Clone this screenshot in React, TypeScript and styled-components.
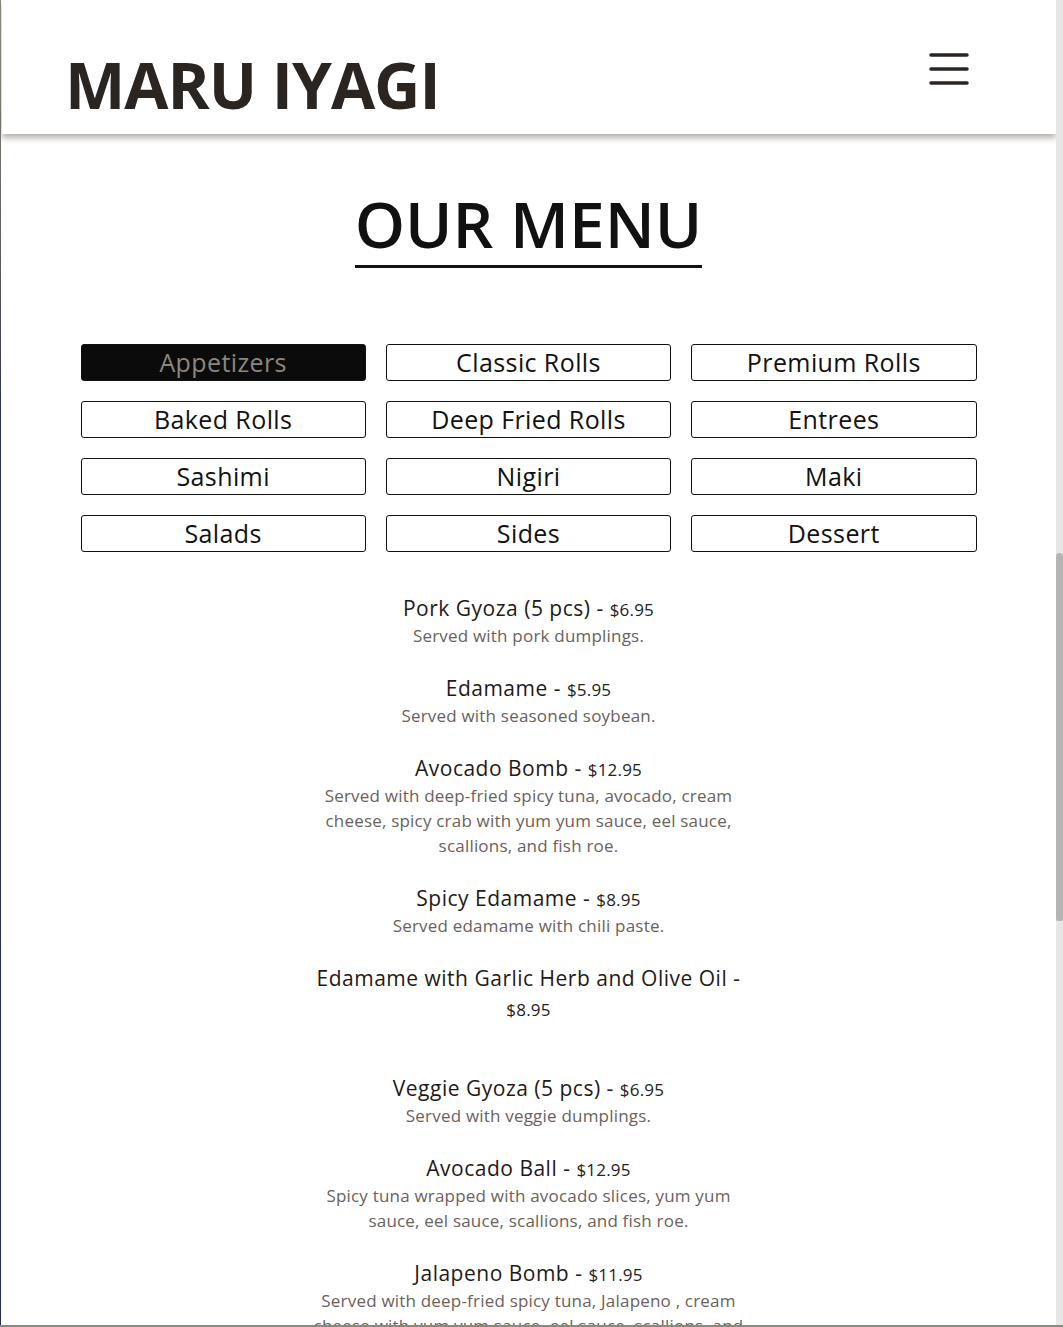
import React from "react";
import styled, { createGlobalStyle } from "styled-components";

const GlobalStyle = createGlobalStyle`
  * { box-sizing: border-box; }
  html, body {
    margin: 0;
    padding: 0;
    background: linear-gradient(180deg, #8a8a7c 0px, #5b5d5a 260px, #2b3150 420px, #2a2f4c 100%);
    font-family: "Open Sans", "Liberation Sans", sans-serif;
  }
`;

const Frame = styled.div`
  margin-left: 1px;
  width: 1062px;
  height: 1325px;
  background: #ffffff;
  display: flex;
  overflow: hidden;
`;

const Page = styled.div`
  flex: 1;
  min-width: 0;
  display: flex;
  flex-direction: column;
  overflow: hidden;
`;

const ScrollTrack = styled.div`
  width: 7px;
  flex: 0 0 7px;
  background: #e6e6e6;
  display: flex;
  flex-direction: column;
`;

const ScrollThumb = styled.div`
  margin-top: 553px;
  height: 368px;
  background: #b5b5b5;
  border-radius: 4px 4px 3px 3px;
`;

const Header = styled.header`
  position: relative;
  z-index: 2;
  margin-left: 1px;
  height: 134px;
  flex: 0 0 134px;
  padding: 53px 87px 0 63px;
  background: #ffffff;
  display: flex;
  justify-content: space-between;
  align-items: flex-start;
  box-shadow: 0 4px 6px rgba(90, 80, 70, 0.45);
`;

const Brand = styled.h1`
  margin: 0;
  font-size: 64px;
  line-height: 64px;
  font-weight: 700;
  letter-spacing: -1px;
  color: #2b2522;
`;

const MenuButton = styled.button`
  margin-top: 0;
  padding: 0;
  border: 0;
  background: transparent;
  width: 40px;
  height: 32px;
  display: block;
  cursor: pointer;
`;

const Main = styled.main`
  display: flex;
  flex-direction: column;
  align-items: center;
  padding-top: 48px;
`;

const SectionTitle = styled.h2`
  display: inline-block;
  margin: 0;
  padding: 0;
  font-size: 64px;
  line-height: 1.3;
  font-weight: 600;
  color: #111111;
  border-bottom: 3px solid #111111;
`;

const CategoryGrid = styled.div`
  margin-top: 76px;
  width: 896px;
  display: grid;
  grid-template-columns: repeat(3, 1fr);
  gap: 20px;
`;

const CategoryButton = styled.button<{ $active?: boolean }>`
  height: 37px;
  padding: 0;
  border: 1px solid #111111;
  border-radius: 3px;
  background: ${(p) => (p.$active ? "#0b0b0b" : "#ffffff")};
  color: ${(p) => (p.$active ? "#8c8680" : "#111111")};
  font-family: "Open Sans", "Liberation Sans", sans-serif;
  font-size: 25px;
  letter-spacing: 0.4px;
  font-weight: 400;
  line-height: 35px;
  cursor: pointer;
`;

const ItemList = styled.div`
  margin-top: 41px;
  width: 432px;
  display: flex;
  flex-direction: column;
  gap: 25px;
  text-align: center;
`;

const Item = styled.div`
  display: flex;
  flex-direction: column;
`;

const ItemName = styled.h3`
  margin: 0;
  font-size: 21px;
  letter-spacing: 0.5px;
  line-height: 30px;
  font-weight: 500;
  color: #1f1a17;
`;

const Price = styled.span`
  font-size: 17px;
  line-height: 1;
  letter-spacing: 0.2px;
  font-weight: 500;
  color: #222222;
`;

const ItemDesc = styled.p`
  margin: 0;
  min-height: 25px;
  font-size: 17px;
  letter-spacing: 0.2px;
  line-height: 25px;
  font-weight: 400;
  color: #6a615b;
`;

const categories = [
  "Appetizers",
  "Classic Rolls",
  "Premium Rolls",
  "Baked Rolls",
  "Deep Fried Rolls",
  "Entrees",
  "Sashimi",
  "Nigiri",
  "Maki",
  "Salads",
  "Sides",
  "Dessert",
];

const items = [
  { name: "Pork Gyoza (5 pcs)", price: "$6.95", desc: "Served with pork dumplings." },
  { name: "Edamame", price: "$5.95", desc: "Served with seasoned soybean." },
  {
    name: "Avocado Bomb",
    price: "$12.95",
    desc: "Served with deep-fried spicy tuna, avocado, cream cheese, spicy crab with yum yum sauce, eel sauce, scallions, and fish roe.",
  },
  { name: "Spicy Edamame", price: "$8.95", desc: "Served edamame with chili paste." },
  { name: "Edamame with Garlic Herb and Olive Oil", price: "$8.95", desc: "" },
  { name: "Veggie Gyoza (5 pcs)", price: "$6.95", desc: "Served with veggie dumplings." },
  {
    name: "Avocado Ball",
    price: "$12.95",
    desc: "Spicy tuna wrapped with avocado slices, yum yum sauce, eel sauce, scallions, and fish roe.",
  },
  {
    name: "Jalapeno Bomb",
    price: "$11.95",
    desc: "Served with deep-fried spicy tuna, Jalapeno , cream cheese with yum yum sauce, eel sauce, scallions, and fish roe.",
  },
];

function Hamburger() {
  return (
    <svg width="40" height="32" viewBox="0 0 40 32" fill="none">
      <g stroke="#2b2522" strokeWidth="3.5" strokeLinecap="round">
        <line x1="2" y1="2" x2="38" y2="2" />
        <line x1="2" y1="16" x2="38" y2="16" />
        <line x1="2" y1="30" x2="38" y2="30" />
      </g>
    </svg>
  );
}

export default function App() {
  return (
    <>
      <GlobalStyle />
      <Frame>
        <Page>
          <Header>
            <Brand>MARU IYAGI</Brand>
            <MenuButton aria-label="Open menu">
              <Hamburger />
            </MenuButton>
          </Header>
          <Main>
            <SectionTitle>OUR MENU</SectionTitle>
            <CategoryGrid>
              {categories.map((c, i) => (
                <CategoryButton key={c} $active={i === 0}>
                  {c}
                </CategoryButton>
              ))}
            </CategoryGrid>
            <ItemList>
              {items.map((it) => (
                <Item key={it.name}>
                  <ItemName>
                    {it.name} - <Price>{it.price}</Price>
                  </ItemName>
                  <ItemDesc>{it.desc}</ItemDesc>
                </Item>
              ))}
            </ItemList>
          </Main>
        </Page>
        <ScrollTrack>
          <ScrollThumb />
        </ScrollTrack>
      </Frame>
    </>
  );
}
